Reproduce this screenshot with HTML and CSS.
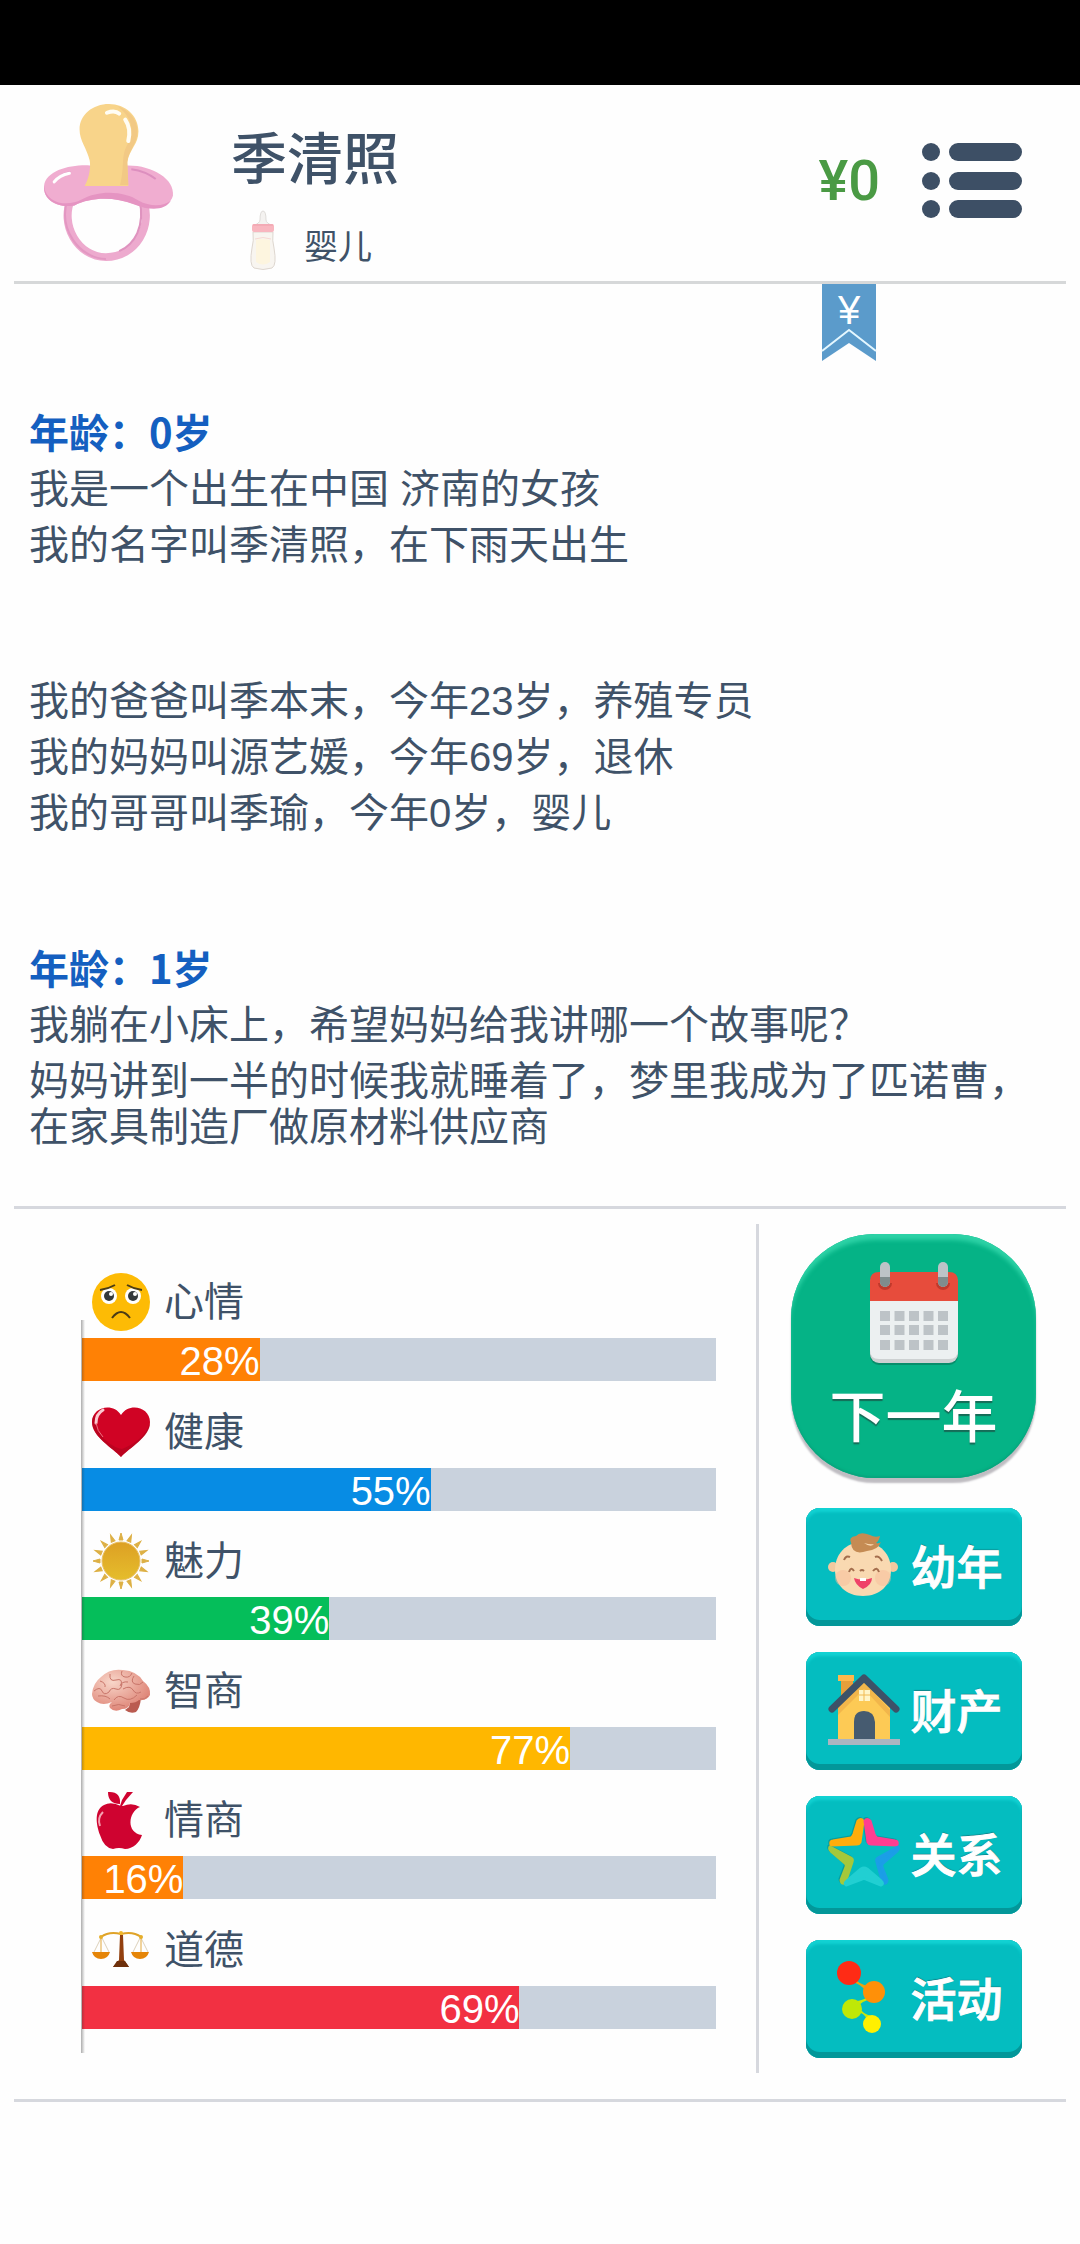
FILE: index.html
```html
<!DOCTYPE html>
<html lang="zh-CN">
<head>
  <meta charset="utf-8">
  <meta name="viewport" content="width=device-width">
  <title>季清照</title>
  <link rel="stylesheet" href="styles.css">
</head>
<body>
  <div class="status-bar"></div>

  <header class="header">
    <svg class="avatar" viewBox="0 0 132 162" preserveAspectRatio="none">
      <path d="M29 99C17 125 35 159 63 159c29 0 47-31 36-61" fill="none" stroke="#edaace" stroke-width="8"/>
      <path d="M25 100C16 130 36 160 63 161" fill="none" stroke="#e397c2" stroke-width="2"/>
      <path d="M96 100c6 28-5 46-20 53" fill="none" stroke="#df93bf" stroke-width="2"/>
      <path d="M2 86C4 70 28 64 47 65h38c24 0 46 14 44 31-3 13-22 15-37 9-20-8-44-8-60 1C16 109 1 101 2 86z" fill="#f0add0"/>
      <path d="M2 86c2 18 23 22 37 14 18-11 44-8 56 1 12 7 25 6 32 0-6 11-22 10-36 4-20-8-42-8-59 1C15 109 1 100 2 86z" fill="#e594c2"/>
      <path d="M88 69q14 2 24 10M13 81q6-8 15-9" fill="none" stroke="#dd8fbf" stroke-width="2"/>
      <path d="M12 82q5-7 15-9" fill="none" stroke="#fff" stroke-width="3" stroke-linecap="round"/>
      <path d="M42 86c5-9 6-20 5-26-3-13-10-20-10-32C37 13 50 2 66 2s29 12 29 28c0 14-9 18-11 32 0 8 1 17 1 24z" fill="#f8d48a"/>
      <path d="M74 4c12 4 20 14 20 26 0 13-8 18-10 31l1 24h-8c5-22 0-29 8-43 7-15 2-28-11-38z" fill="#f2c985"/>
      <path d="M64 11q8-3 12 1M82 18q6 9 3 22" fill="none" stroke="#fffdf4" stroke-width="4" stroke-linecap="round"/>
    </svg>
    <div class="profile">
      <h1 class="name">季清照</h1>
      <div class="stage">
        <svg class="bottle" viewBox="0 0 28 60">
          <path d="M11 10q0-9 3-9t3 9q0 3 7 6H4q7-3 7-6z" fill="#f4f2f0" stroke="#dfdcd9"/>
          <path d="M4 22h20q-1 9 1 16 3 17-2 20-9 3-18 0-5-3-2-20 2-7 1-16z" fill="#f8f5f0" stroke="#ddd6cf"/>
          <path d="M7 30q7-2 14 0v22q-7 5-14 0z" fill="#fdf5df"/>
          <path d="M6 29q8-3 16 0" stroke="#f6d9d3" fill="none"/>
          <rect x="3" y="14" width="22" height="8" rx="2" fill="#f8b6bf"/>
          <path d="M4 15h20" stroke="#ee9fab"/>
        </svg>
        <span>婴儿</span>
      </div>
    </div>
    <div class="money">¥0</div>
    <button class="menu-button" aria-label="菜单">
      <svg viewBox="0 0 100 76" fill="#3d4f65">
        <circle cx="9" cy="9" r="9"/>
        <circle cx="9" cy="38" r="9"/>
        <circle cx="9" cy="66" r="9"/>
        <rect x="27" y="0" width="73" height="18" rx="9"/>
        <rect x="27" y="29" width="73" height="18" rx="9"/>
        <rect x="27" y="57" width="73" height="18" rx="9"/>
      </svg>
    </button>
    <button class="ribbon">
      <svg viewBox="0 0 54 77">
        <path d="M0 0h54v77L27 59 0 77z" fill="#5b9bcb"/>
        <path d="M0 67l27-21 27 21" fill="none" stroke="#e4f7ff" stroke-width="2"/>
      </svg>
      <span>¥</span>
    </button>
  </header>

  <main>
    <section class="log">
      <div class="log-entry">
        <h2>年龄：0岁</h2>
        <p>我是一个出生在中国 济南的女孩</p>
        <p>我的名字叫季清照，在下雨天出生</p>
      </div>
      <div class="log-entry">
        <p>我的爸爸叫季本末，今年23岁，养殖专员</p>
        <p>我的妈妈叫源艺媛，今年69岁，退休</p>
        <p>我的哥哥叫季瑜，今年0岁，婴儿</p>
      </div>
      <div class="log-entry">
        <h2>年龄：1岁</h2>
        <p>我躺在小床上，希望妈妈给我讲哪一个故事呢？</p>
        <p>妈妈讲到一半的时候我就睡着了，梦里我成为了匹诺曹，在家具制造厂做原材料供应商</p>
      </div>
    </section>

    <section class="panel">
      <div class="stats">
        <div class="stat">
          <div class="stat-label">
            <svg viewBox="0 0 58 58">
              <circle cx="29" cy="29" r="29" fill="#fdbb05"/>
              <circle cx="17" cy="23" r="8" fill="#fff"/>
              <circle cx="41" cy="23" r="8" fill="#fff"/>
              <circle cx="17" cy="23" r="5" fill="#33393c"/>
              <circle cx="41" cy="23" r="5" fill="#33393c"/>
              <circle cx="19" cy="21" r="2" fill="#fff"/>
              <circle cx="43" cy="21" r="2" fill="#fff"/>
              <path d="M8 17q8-1 15-5M50 17q-8-1-15-5M20 45q9-12 18 0" fill="none" stroke="#4b3c16" stroke-width="2"/>
            </svg>
            <span>心情</span>
          </div>
          <div class="bar"><div class="fill mood" style="width: 28%">28%</div></div>
        </div>
        <div class="stat">
          <div class="stat-label">
            <svg viewBox="0 0 58 58">
              <path d="M29 54C21 45 0 34 0 19 0 4 21-1 29 12 37-1 58 4 58 19c0 15-21 26-29 35z" fill="#d00324"/>
              <path d="M29 54C21 45 0 34 0 19q0-5 3-8c-2 19 15 33 27 35 11-4 24-13 28-26 0 14-21 25-29 34z" fill="#ad041c" opacity=".6"/>
              <path d="M4 20q0-9 7-13" fill="none" stroke="#fbc9d0" stroke-width="3" stroke-linecap="round"/>
              <path d="M4 20q1 8 7 14" fill="none" stroke="#ec6f80"/>
            </svg>
            <span>健康</span>
          </div>
          <div class="bar"><div class="fill health" style="width: 55%">55%</div></div>
        </div>
        <div class="stat">
          <div class="stat-label">
            <svg viewBox="0 0 58 58">
              <defs>
                <linearGradient id="sun" x2="0" y2="1">
                  <stop stop-color="#dda024"/>
                  <stop offset="1" stop-color="#e5bd2c"/>
                </linearGradient>
                <g id="rays">
                  <path id="ray" d="M27 8l2-7 2 7z"/>
                  <use href="#ray" transform="rotate(90 29 29)"/>
                  <use href="#ray" transform="rotate(180 29 29)"/>
                  <use href="#ray" transform="rotate(270 29 29)"/>
                </g>
              </defs>
              <g fill="#ddb045" stroke="#ddb045">
                <use href="#rays"/>
                <use href="#rays" transform="rotate(22 29 29)"/>
                <use href="#rays" transform="rotate(45 29 29)"/>
                <use href="#rays" transform="rotate(68 29 29)"/>
              </g>
              <circle cx="29" cy="29" r="19" fill="url(#sun)" stroke="#eac064"/>
            </svg>
            <span>魅力</span>
          </div>
          <div class="bar"><div class="fill charm" style="width: 39%">39%</div></div>
        </div>
        <div class="stat">
          <div class="stat-label">
            <svg viewBox="0 0 58 58">
              <defs>
                <radialGradient id="brain" cx=".35" cy=".3" r=".7">
                  <stop stop-color="#f8d6c9"/>
                  <stop offset="1" stop-color="#df8678"/>
                </radialGradient>
              </defs>
              <path d="M38 40l11-4q-1 10-5 14-6 2-11-2l4-3z" fill="#ba5b50"/>
              <path d="M0 32Q1 21 9 15q9-9 22-7 14 1 20 11 8 6 7 14-3 6-11 5-3 3-9 3-1 6-8 6-7 4-12-1-2-3 2-6-9 4-15 0-5-3-5-8z" fill="url(#brain)"/>
              <path d="M2 29q6-5 8 0t7 1q2-5 7-3t6-5M8 19q6 2 5 6m5-13q-1 8 6 6t5 5m1-14q-2 5 3 6t7-4m2 3q-4 6 1 8t8-2M31 27q7-4 10 1t8 2M22 38q4-6 10-2t13-3M20 44q7-3 13 0M6 34q8-1 12 3M36 20q-6-1-8 4M48 37q5 1 8-3" fill="none" stroke="#c87569"/>
            </svg>
            <span>智商</span>
          </div>
          <div class="bar"><div class="fill iq" style="width: 77%">77%</div></div>
        </div>
        <div class="stat">
          <div class="stat-label">
            <svg viewBox="0 0 58 58">
              <path d="M29 15Q19 10 12 14C2 19 4 33 8 44q4 13 13 14 6-2 12 0c8 0 15-7 17-14C34 42 36 21 48 16q-8-5-17-1z" fill="#cf0330"/>
              <path d="M28 15l2-6 5-8h6L34 9l-4 6zM16 1q13-1 12 12Q16 13 16 1z" fill="#cf0330"/>
              <path d="M11 21q-6 6-3 14" fill="none" stroke="#f5a3b2" stroke-width="2"/>
            </svg>
            <span>情商</span>
          </div>
          <div class="bar"><div class="fill eq" style="width: 16%">16%</div></div>
        </div>
        <div class="stat">
          <div class="stat-label">
            <svg viewBox="0 0 58 58">
              <path d="M9 17L2 31M10 17l7 14M48 17l-7 14M49 17l7 14" stroke="#ddd1ba"/>
              <path d="M9 17v14M49 17v14" stroke="#e3a83b"/>
              <path d="M9 16q8-6 20-3 12-3 20 3" fill="none" stroke="#dfa329" stroke-width="2"/>
              <circle cx="9" cy="16" r="2" fill="#e6ae2b"/>
              <circle cx="49" cy="16" r="2" fill="#e6ae2b"/>
              <circle cx="29" cy="12" r="2" fill="#f1b72a"/>
              <path d="M0 31h18q-2 7-9 7t-9-7zM39 31h18q-2 7-9 7t-9-7z" fill="#e58508"/>
              <path d="M28 14h3l1 25 5 7H21l6-7z" fill="#92400f"/>
              <path d="M25 40h8l4 6H21z" fill="#6e300b"/>
            </svg>
            <span>道德</span>
          </div>
          <div class="bar"><div class="fill moral" style="width: 69%">69%</div></div>
        </div>
      </div>

      <nav class="actions">
        <button class="next-button">
          <svg viewBox="0 0 88 104">
            <rect x="0" y="12" width="88" height="91" rx="9" fill="#087f60" opacity=".7"/>
            <rect x="0" y="12" width="88" height="89" rx="9" fill="#cdd1d2"/>
            <path d="M0 36h88v52q0 9-9 9H9q-9 0-9-9z" fill="#ecf0f1"/>
            <path d="M0 39V19q0-9 9-9h70q9 0 9 9v20z" fill="#e74c3c"/>
            <path d="M8 21a7 7 0 1 0 14 0zM66 21a7 7 0 1 0 14 0z" fill="#c0392b"/>
            <g fill="#bdc3c7">
              <rect x="10" y="0" width="10" height="25" rx="5"/>
              <rect x="68" y="0" width="10" height="25" rx="5"/>
            </g>
            <path d="M10 15h10v5a5 5 0 0 1-10 0zM68 15h10v5a5 5 0 0 1-10 0z" fill="#7f8c8d"/>
            <g stroke="#bdc3c7" stroke-width="10" stroke-dasharray="10 4.5">
              <path d="M10 54h68"/>
              <path d="M10 68h68"/>
              <path d="M10 83h68"/>
            </g>
          </svg>
          <span>下一年</span>
        </button>
        <button class="action-button">
          <svg viewBox="0 0 72 72">
            <circle cx="5" cy="38" r="5" fill="#f2c99f"/>
            <circle cx="65" cy="38" r="5" fill="#f2c99f"/>
            <path d="M35 13c18 0 28 13 28 28S52 67 35 67 7 56 7 41s10-28 28-28z" fill="#f9d9b1"/>
            <circle cx="15" cy="49" r="8" fill="#f7bd9c" opacity=".5"/>
            <circle cx="55" cy="49" r="8" fill="#f7bd9c" opacity=".5"/>
            <path d="M23 14q-3-6 5-7 4-5 14-1 5 3 10 1-1 5-4 7 3 1 5-1-3 8-14 9-15 5-16-8z" fill="#c58b53"/>
            <path d="M36 14q7 2 10 1-3 4-10-1z" fill="#f9d9b1"/>
            <path d="M16 31q2-5 6-3M47 28q4-2 7 4M21 43q2-6 5-1M45 42q4-5 6 1M32 42q2-2 4 0" fill="none" stroke="#a46e4d" stroke-width="2"/>
            <path d="M26 49q9 3 18 0 0 7-9 11-8-4-9-11z" fill="#ef4268"/>
            <path d="M32 49h6v3h-6z" fill="#fff"/>
          </svg>
          <span>幼年</span>
        </button>
        <button class="action-button">
          <svg viewBox="0 0 72 72">
            <path d="M13 6h12v24H13z" fill="#e79f3b"/>
            <path d="M10 2h16v6H10z" fill="#ffb84c"/>
            <path d="M10 32L36 5l26 27v34H10z" fill="#fdca55"/>
            <path d="M10 35L36 9l26 28v7L36 16 10 42z" fill="#f2b64b"/>
            <path d="M4 36L36 5l32 31" fill="none" stroke="#3d5268" stroke-width="7" stroke-linejoin="round" stroke-linecap="round"/>
            <path d="M26 66V49q0-11 10-11t11 11v17z" fill="#465b70"/>
            <path d="M31 17h11v11H31z" fill="#fff5c8"/>
            <path d="M36 17v11M31 22h11" stroke="#f1ba53"/>
            <path d="M0 66h72v6H0z" fill="#abb5c1"/>
          </svg>
          <span>财产</span>
        </button>
        <button class="action-button">
          <svg viewBox="0 0 72 72" stroke-width="3" stroke-linejoin="round">
            <g fill="#087f80" stroke="#087f80" opacity=".5" transform="translate(-1 -1)">
              <path d="M30 4q3-3 5 0l-3 21q-1 2-3 2L3 28q-1-4 2-4l18-3q2-1 3-4z"/>
              <path d="M42 4q-3-3-5 0l3 21q1 2 3 2l26 1q1-4-2-4l-18-3q-2-1-3-4z"/>
              <path d="M2 30q-1 2 1 4l14 12q2 2 1 4l-5 13q0 4 4 3l7-21q1-3-1-4z"/>
            </g>
            <path d="M30 4q3-3 5 0l-3 21q-1 2-3 2L3 28q-1-4 2-4l18-3q2-1 3-4z" fill="#ffad0b" stroke="#ffad0b"/>
            <path d="M42 4q-3-3-5 0l3 21q1 2 3 2l26 1q1-4-2-4l-18-3q-2-1-3-4z" fill="#ff3e91" stroke="#ff3e91"/>
            <path d="M2 30q-1 2 1 4l14 12q2 2 1 4l-5 13q0 4 4 3l7-21q1-3-1-4z" fill="#a5c83b" stroke="#a5c83b"/>
            <path d="M70 30q1 2-1 4L55 46q-2 2-1 4l5 13q0 4-4 3l-6-21q-1-3 1-4z" fill="#1b9ee7" stroke="#1b9ee7"/>
            <path d="M18 68q-2-2 1-4l14-12q3-2 6 0l14 12q3 3 0 4l-15-6q-2-1-4 0z" fill="#21cfd2" stroke="#21cfd2"/>
          </svg>
          <span>关系</span>
        </button>
        <button class="action-button">
          <svg viewBox="0 0 72 72">
            <path d="M24 14q8 12 20 11l-4 8Q34 22 20 20z" fill="#e5a514"/>
            <path d="M42 34q-6 6-16 6l4 6q3-6 14-8zM26 52q8-3 13 6l5-3q-10-2-13-9z" fill="#cce60b"/>
            <circle cx="21" cy="12" r="12" fill="#ff2b15"/>
            <circle cx="46" cy="31" r="11" fill="#ff9008"/>
            <circle cx="24" cy="48" r="10" fill="#bfe807"/>
            <circle cx="44" cy="63" r="9" fill="#fff000"/>
          </svg>
          <span>活动</span>
        </button>
      </nav>
    </section>
  </main>
</body>
</html>
```
FILE: styles.css
```css
* {
  box-sizing: border-box;
  margin: 0;
  padding: 0;
}

body {
  min-height: 100vh;
  background-color: #fefefe;
  color: #3f5268;
  font-family: "Liberation Sans", "Noto Sans CJK SC", sans-serif;
  font-size: 40px;
  line-height: 46px;
}

button {
  border: none;
  background: none;
  font-family: inherit;
  cursor: pointer;
}

svg {
  display: block;
  overflow: visible;
}

.status-bar {
  height: 85px;
  background-color: #000;
}

.header {
  position: relative;
  display: flex;
  align-items: center;
  height: 199px;
  margin: 0 14px;
  padding: 0 44px 4px 28px;
  border-bottom: 3px solid #d6d8d9;
}

.avatar {
  width: 134px;
  height: 158px;
}

.profile {
  flex: 1;
  align-self: flex-start;
  padding: 36px 0 0 55px;
}

.name {
  font-family: "Noto Sans CJK SC", sans-serif;
  font-size: 56px;
  font-weight: 500;
  line-height: 68px;
}

.stage {
  display: flex;
  align-items: flex-end;
  gap: 27px;
  margin-top: 21px;
  padding-left: 18px;
  font-size: 34px;
}

.bottle {
  width: 28px;
  height: 60px;
}

.money {
  color: #4a9a44;
  font-family: Roboto, sans-serif;
  font-size: 56px;
  font-weight: 500;
  line-height: 60px;
}

.menu-button {
  width: 100px;
  margin-left: 42px;
}

.ribbon {
  position: absolute;
  top: 199px;
  right: 190px;
  width: 54px;
  height: 77px;
  color: #fff;
}

.ribbon svg {
  width: 100%;
}

.ribbon span {
  position: absolute;
  top: 3px;
  left: 0;
  width: 100%;
  font-size: 40px;
  line-height: 46px;
}

.log {
  display: flex;
  flex-direction: column;
  gap: 110px;
  margin: 0 14px;
  padding: 126px 16px 56px 15px;
  border-bottom: 3px solid #d6d8de;
}

.log-entry {
  display: flex;
  flex-direction: column;
  gap: 10px;
}

.log-entry h2 {
  padding-bottom: 4px;
  color: #145fc0;
  font-family: "Noto Sans CJK SC", sans-serif;
  font-size: 40px;
  font-weight: 700;
  line-height: 42px;
}

.panel {
  display: flex;
  margin: 0 14px;
  padding: 15px 0 26px;
  border-bottom: 3px solid #d6d8de;
}

.stats {
  position: relative;
  flex: 1;
  display: flex;
  flex-direction: column;
  justify-content: space-between;
  margin-right: 40px;
  padding: 49px 0 44px 68px;
}

/* left axis with a soft shadow over the bars */
.stats::before {
  content: '';
  position: absolute;
  top: 96px;
  bottom: 20px;
  left: 67px;
  width: 4px;
  background: linear-gradient(to right, rgba(50, 50, 50, 0.4), rgba(50, 50, 50, 0));
  z-index: 1;
}

.stat-label {
  display: flex;
  align-items: center;
  gap: 14px;
  padding-left: 10px;
  margin-bottom: 7px;
}

.stat-label svg {
  width: 58px;
  height: 58px;
}

.bar {
  height: 43px;
  background-color: #c9d2dd;
}

.fill {
  height: 100%;
  color: #fff;
  text-align: right;
}

.mood,
.eq {
  background-color: #ff8105;
}

.health {
  background-color: #078ce4;
}

.charm {
  background-color: #05be5a;
}

.iq {
  background-color: #ffb700;
}

.moral {
  background-color: #f23042;
}

.actions {
  display: flex;
  flex-direction: column;
  align-items: center;
  gap: 26px;
  padding: 10px 30px 15px 32px;
  border-left: 3px solid #d6d8de;
}

.next-button {
  display: flex;
  flex-direction: column;
  align-items: center;
  gap: 18px;
  width: 245px;
  height: 244px;
  margin-bottom: 4px;
  padding-top: 28px;
  border-radius: 84px;
  background-color: #05b386;
  box-shadow: 0 5px 2px #bfbdc2, inset 0 7px 4px -1px #2dd2a6, inset 0 -2px 2px #08a57d;
  color: #fff;
  font-size: 56px;
  font-weight: 500;
  line-height: 68px;
  text-shadow: 0 2px 1px #166b57;
}

.next-button svg {
  flex: none;
  width: 88px;
  height: 104px;
}

.action-button {
  display: flex;
  align-items: center;
  gap: 11px;
  width: 216px;
  height: 118px;
  padding: 0 0 4px 22px;
  border-radius: 14px;
  background-color: #04bdc0;
  box-shadow: inset 0 -6px 0 #039799, inset 0 4px 3px #12d2d3, inset 1px 0 1px #079fa2, inset -1px 0 1px #079fa2;
  color: #fff;
  font-size: 46px;
  font-weight: 500;
  line-height: 56px;
  text-shadow: 0 -1px 1px #176064;
  -webkit-text-stroke: 1px #fff;
}

.action-button svg {
  flex: none;
  width: 72px;
  height: 72px;
}

.action-button span {
  padding-top: 5px;
}
```
